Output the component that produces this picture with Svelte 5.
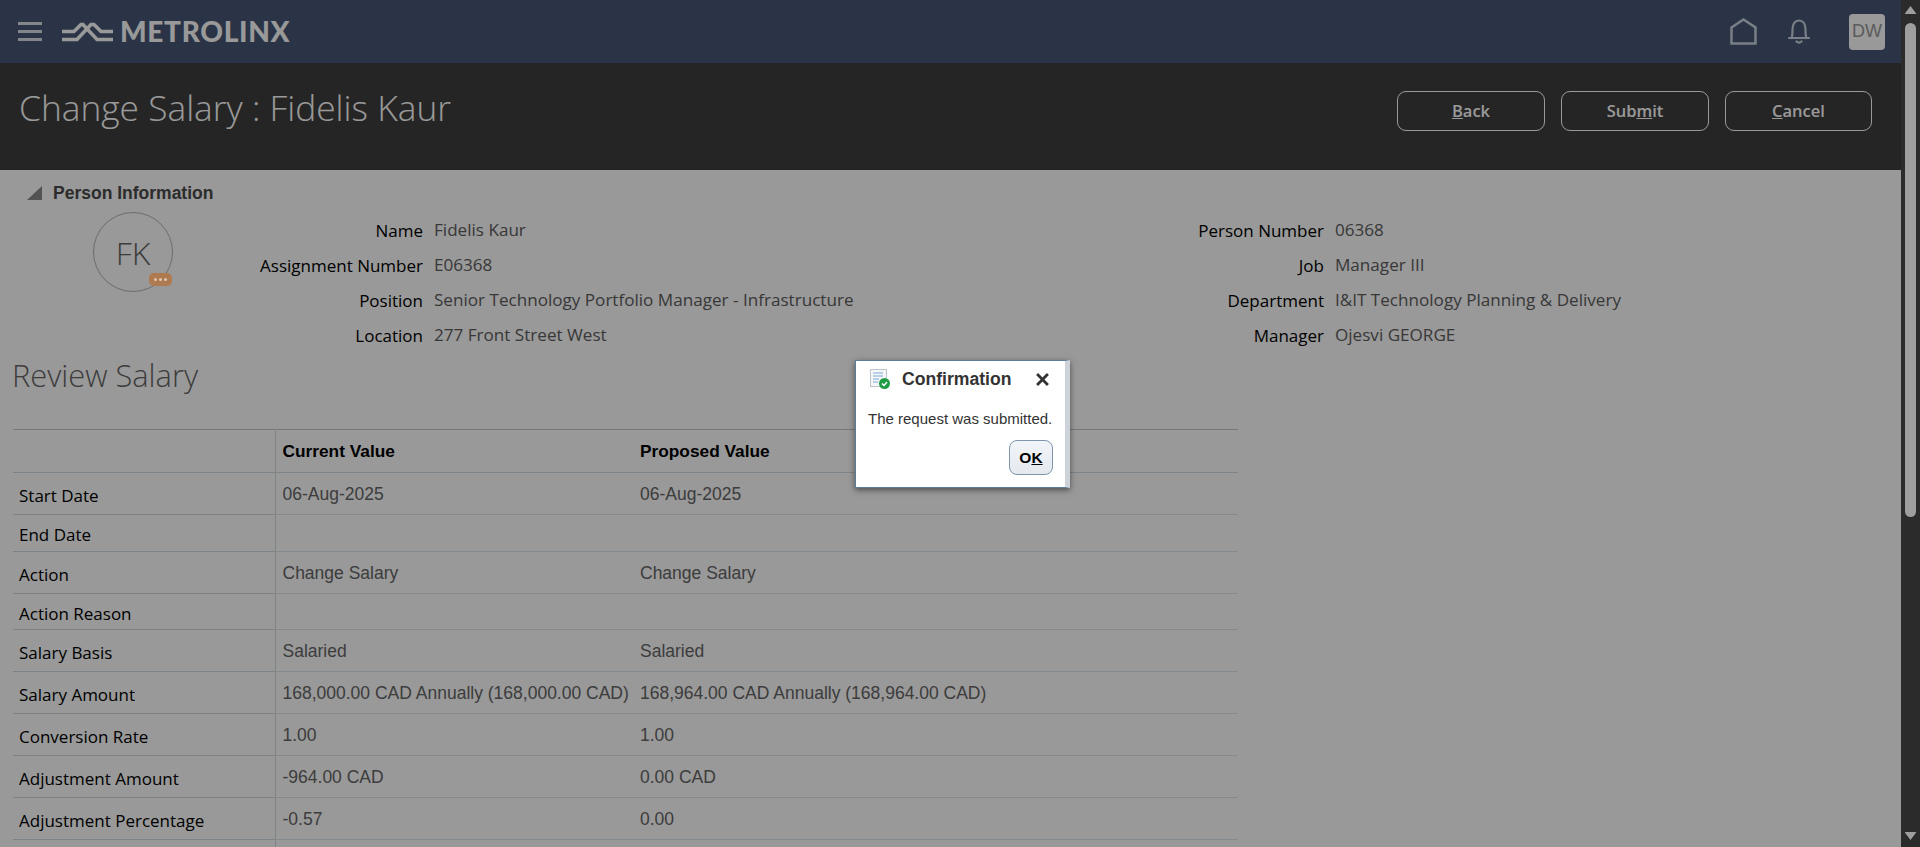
<script>
  const person = [
    ["Name", "Fidelis Kaur", "Person Number", "06368"],
    ["Assignment Number", "E06368", "Job", "Manager III"],
    ["Position", "Senior Technology Portfolio Manager - Infrastructure", "Department", "I&IT Technology Planning & Delivery"],
    ["Location", "277 Front Street West", "Manager", "Ojesvi GEORGE"]
  ];

  const rows = [
    { label: "Start Date", current: "06-Aug-2025", proposed: "06-Aug-2025" },
    { label: "End Date", current: "", proposed: "", short: true },
    { label: "Action", current: "Change Salary", proposed: "Change Salary" },
    { label: "Action Reason", current: "", proposed: "", short: true },
    { label: "Salary Basis", current: "Salaried", proposed: "Salaried" },
    { label: "Salary Amount", current: "168,000.00 CAD Annually (168,000.00 CAD)", proposed: "168,964.00 CAD Annually (168,964.00 CAD)" },
    { label: "Conversion Rate", current: "1.00", proposed: "1.00" },
    { label: "Adjustment Amount", current: "-964.00 CAD", proposed: "0.00 CAD" },
    { label: "Adjustment Percentage", current: "-0.57", proposed: "0.00" },
    { label: "", current: "", proposed: "" }
  ];
</script>

<div class="shell">
  <div class="page">
    <header class="topbar">
      <div class="brand">
        <button class="burger" aria-label="Menu"><span></span><span></span><span></span></button>
        <svg class="mark" viewBox="0 0 51 20" width="51" height="20" fill="none" stroke="#fff" stroke-width="3.6" aria-hidden="true">
          <path d="M0 9.500H12L19 2.500H21L35 17.500H51" />
          <path d="M0 17.500H15L29 2.500H32L39 9.500H51" />
        </svg>
        <span class="wordmark">METROLINX</span>
      </div>
      <div class="tools">
        <svg class="home" viewBox="0 0 27 27" width="27" height="27" fill="none" stroke="#ccd3df" stroke-width="2.500" aria-hidden="true">
          <path d="M1.500 9.500L13.500 1.500 25.500 9.500V25.500H1.500z" />
        </svg>
        <svg class="bell" viewBox="0 0 24 25" width="24" height="25" fill="none" stroke="#ccd3df" stroke-width="2.200" stroke-linecap="round" aria-hidden="true">
          <path d="M2 19H22M4.500 19C5.500 17 5.500 14 5.500 10.500 5.500 5 8 1.500 12 1.500S18.500 5 18.500 10.500C18.500 14 18.500 17 19.500 19" />
          <path d="M9.500 22.500c1.500 1.300 3.500 1.300 5 0" />
        </svg>
        <div class="me">DW</div>
      </div>
    </header>

    <div class="titlebar">
      <h1>Change Salary : Fidelis Kaur</h1>
      <div class="actions">
        <button><u>B</u>ack</button>
        <button>Sub<u>m</u>it</button>
        <button><u>C</u>ancel</button>
      </div>
    </div>

    <main>
      <div class="disclosure">
        <span class="tri"></span>
        <h2>Person Information</h2>
      </div>

      <section class="person">
        <div class="avatar">
          FK
          <span class="more"><i></i><i></i><i></i></span>
        </div>
        <div class="facts">
          {#each person as p}
            <div class="key">{p[0]}</div>
            <div class="val">{p[1]}</div>
            <div class="key">{p[2]}</div>
            <div class="val">{p[3]}</div>
          {/each}
        </div>
      </section>

      <h3>Review Salary</h3>

      <table>
        <thead>
          <tr>
            <th class="first"></th>
            <th>Current Value</th>
            <th>Proposed Value</th>
          </tr>
        </thead>
        <tbody>
          {#each rows as row}
            <tr class:short={row.short}>
              <td class="first"><span>{row.label}</span></td>
              <td class="cell">{row.current}</td>
              <td class="cell">{row.proposed}</td>
            </tr>
          {/each}
        </tbody>
      </table>
    </main>

    <div class="overlay"></div>

    <div class="dialog">
      <div class="dialog-head">
        <svg viewBox="0 0 20 20" width="20" height="20" aria-hidden="true">
          <rect x="0.500" y="0.500" width="16" height="17" fill="#f4f6f8" stroke="#bfc4c8" />
          <path d="M3 4h10M3 7h10M3 10h6M3 13h5" stroke="#7fa8d6" stroke-width="1.200" />
          <circle cx="14.500" cy="14.500" r="5.500" fill="#1f9d46" />
          <path d="M12 14.500l2 2 3-3.500" fill="none" stroke="#fff" stroke-width="1.500" />
        </svg>
        <strong>Confirmation</strong>
        <svg class="close" viewBox="0 0 12 12" width="13" height="13" aria-hidden="true">
          <path d="M1 1l10 10M11 1L1 11" stroke="#333" stroke-width="2.600" />
        </svg>
      </div>
      <p>The request was submitted.</p>
      <div class="dialog-foot"><button>O<u>K</u></button></div>
    </div>
  </div>

  <div class="scrollbar">
    <span class="up"></span>
    <span class="thumb"></span>
    <span class="down"></span>
  </div>
</div>

<style>
  :global(body) {
    margin: 0;
    overflow: hidden;
    background: #fff;
  }

  .shell {
    display: flex;
    height: 847px;
    font-family: "Liberation Sans", Arial, sans-serif;
  }

  .page {
    position: relative;
    flex: 1;
    min-width: 0;
    overflow: hidden;
  }

  .overlay {
    position: absolute;
    inset: 0;
    background: rgba(0, 0, 0, 0.4);
  }

  .topbar {
    display: flex;
    justify-content: space-between;
    align-items: center;
    height: 63px;
    background: #465876;
    padding: 0 16px 0 18px;
  }

  .brand {
    display: flex;
    align-items: center;
  }

  .burger {
    display: flex;
    flex-direction: column;
    gap: 5px;
    width: 24px;
    padding: 0;
    margin-right: 20px;
    border: 0;
    background: none;
  }

  .burger span {
    height: 3px;
    background: #dde1e7;
  }

  .wordmark {
    margin: 0 0 2px 7px;
    font-family: Lato, sans-serif;
    font-weight: 900;
    font-size: 28px;
    letter-spacing: 0.7px;
    color: #fff;
  }

  .tools {
    display: flex;
    align-items: center;
  }

  .bell {
    margin-left: 30px;
  }

  .me {
    display: flex;
    align-items: center;
    justify-content: center;
    width: 36px;
    height: 36px;
    margin-left: 38px;
    border-radius: 4px;
    background: #fff;
    color: #999;
    font-size: 18px;
  }

  .titlebar {
    display: flex;
    justify-content: space-between;
    height: 107px;
    background: #3f3f3f;
    padding: 0 28px 0 19px;
  }

  h1 {
    margin: 19px 0 0;
    font-family: "Open Sans", sans-serif;
    font-weight: 300;
    font-size: 35.300px;
    line-height: 50px;
    color: #fff;
  }

  .actions {
    display: flex;
    gap: 16px;
    margin-top: 28px;
  }

  .actions button {
    width: 148px;
    height: 40px;
    padding: 0 0 2px;
    border: 1px solid #fff;
    border-radius: 9px;
    background: none;
    color: #fff;
    font-family: "Open Sans", sans-serif;
    font-size: 16.500px;
    font-weight: 600;
  }

  .actions button:last-child {
    width: 147px;
    margin-right: 1px;
  }

  main {
    height: 677px;
    background: #fff;
    overflow: hidden;
  }

  .disclosure {
    display: flex;
    align-items: center;
    height: 22px;
    padding: 12px 0 0 27px;
  }

  .tri {
    width: 15px;
    height: 14px;
    margin-right: 11px;
    background: #8a8a8a;
    clip-path: polygon(100% 0, 100% 100%, 0 100%);
  }

  h2 {
    margin: 0;
    font-size: 17.500px;
    font-weight: 700;
    color: #4a4a4a;
  }

  .person {
    display: flex;
    padding: 8px 0 0 93px;
  }

  .avatar {
    position: relative;
    display: flex;
    align-items: center;
    justify-content: center;
    flex: none;
    box-sizing: border-box;
    width: 80px;
    height: 80px;
    border: 1px solid #b5b5b5;
    border-radius: 50%;
    font-family: "Open Sans", sans-serif;
    font-weight: 300;
    font-size: 32px;
    color: #666;
  }

  .more {
    position: absolute;
    z-index: 1;
    right: 0;
    bottom: 5px;
    display: flex;
    align-items: center;
    justify-content: center;
    gap: 2px;
    width: 23px;
    height: 13px;
    border-radius: 5px;
    background: #b07a50;
  }

  .more i {
    width: 3px;
    height: 3px;
    border-radius: 50%;
    background: #dcc7b5;
  }

  .facts {
    display: grid;
    grid-template-columns: 250px 689px 190px 1fr;
    grid-auto-rows: 35px;
    column-gap: 11px;
    padding-top: 1px;
    font-family: "Open Sans", sans-serif;
    font-size: 17px;
    line-height: 35px;
  }

  .key {
    text-align: right;
    color: #000;
    font-weight: 500;
  }

  .val {
    color: #5e5e5e;
    font-size: 17.100px;
    font-weight: 500;
    transform: translateY(-1px);
  }

  h3 {
    margin: 2px 0 0 12px;
    font-family: "Open Sans", sans-serif;
    font-weight: 300;
    font-size: 30.800px;
    line-height: 40px;
    color: #666;
  }

  table {
    width: 1225px;
    margin: 34px 0 0 13px;
    border-collapse: collapse;
    table-layout: fixed;
  }

  th,
  td {
    box-sizing: border-box;
  }

  th {
    height: 43px;
    padding: 0 7px;
    border-top: 1px solid #c3c9cf;
    border-bottom: 1px solid #d4dae0;
    text-align: left;
    font-size: 17.300px;
    font-weight: 700;
    color: #000;
  }

  th:nth-child(1) {
    width: 262px;
  }

  th:nth-child(2) {
    width: 358px;
  }

  td {
    height: 42px;
    padding: 0 7px;
    border-bottom: 1px solid #e2e7ec;
    font-size: 17.500px;
    color: #666;
    white-space: nowrap;
  }

  tr.short td {
    height: 36.500px;
  }

  .first {
    padding: 0 6px;
    border-right: 1px solid #d4dae0;
    border-bottom-color: #d4dae0;
    font-family: "Open Sans", sans-serif;
    font-size: 17px;
    font-weight: 500;
    color: #000;
  }

  .first span {
    position: relative;
    top: 2px;
  }

  .cell {
    padding-top: 2px;
  }

  .dialog {
    position: absolute;
    left: 855px;
    top: 360px;
    box-sizing: border-box;
    width: 215px;
    height: 128px;
    border: 1px solid #5d7c99;
    border-right: 5px solid #cdd3d8;
    background: #fff;
    box-shadow: 0 2px 6px rgba(0, 0, 0, 0.5);
    padding: 8px 13px 0 14px;
  }

  .dialog-head {
    display: flex;
    align-items: center;
    height: 20px;
  }

  .dialog-head strong {
    margin-left: 12px;
    font-size: 17.600px;
    color: #333;
  }

  .close {
    margin-left: auto;
    margin-right: 3px;
  }

  .dialog p {
    margin: 21px 0 0 -2px;
    font-size: 15px;
    line-height: 18px;
    color: #333;
    white-space: nowrap;
  }

  .dialog-foot {
    display: flex;
    justify-content: flex-end;
    margin-top: 12px;
  }

  .dialog-foot button {
    width: 44px;
    height: 35px;
    padding: 0;
    margin-right: -1px;
    border: 1px solid #7d96ae;
    border-radius: 8px;
    background: linear-gradient(#f2f5f8, #e4e9ee);
    font-family: inherit;
    font-size: 15.500px;
    font-weight: 700;
    color: #000;
  }

  .scrollbar {
    position: relative;
    flex: none;
    display: flex;
    flex-direction: column;
    align-items: center;
    width: 19px;
    background: #2b2b2b;
  }

  .up,
  .down {
    flex: none;
    width: 12px;
    height: 8px;
    background: #9e9e9e;
  }

  .up {
    margin-top: 6px;
    clip-path: polygon(50% 0, 100% 100%, 0 100%);
  }

  .down {
    margin-bottom: 7px;
    clip-path: polygon(0 0, 100% 0, 50% 100%);
  }

  .thumb {
    flex: none;
    width: 11px;
    height: 494px;
    margin: 9px 0 auto;
    border-radius: 6px;
    background: #9e9e9e;
  }
</style>
